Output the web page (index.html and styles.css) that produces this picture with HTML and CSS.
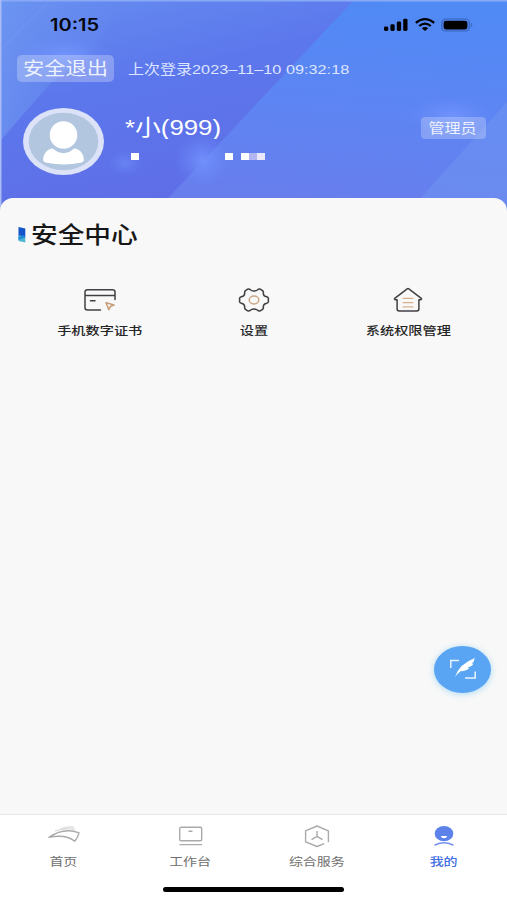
FILE: index.html
```html
<!DOCTYPE html>
<html lang="zh-CN">
<head>
<meta charset="utf-8">
<title>我的</title>
<link rel="stylesheet" href="styles.css">
</head>
<body>
<div class="app">
  <header class="hero">
    <svg class="hero-bg" viewBox="0 0 507 212" aria-hidden="true">
      <defs>
        <linearGradient id="base" x1="0" y1="0" x2="0.55" y2="1"><stop offset="0" stop-color="#668df0"/><stop offset=".4" stop-color="#5c77ec"/><stop offset="1" stop-color="#606be5"/></linearGradient>
        <linearGradient id="band" x1="0.65" y1="0" x2="0.5" y2="1"><stop offset="0" stop-color="#508af5"/><stop offset=".5" stop-color="#5d85f3"/><stop offset="1" stop-color="#697dec"/></linearGradient>
        <linearGradient id="left" x1="0" y1="0" x2="1" y2="0"><stop offset="0" stop-color="#7099f2" stop-opacity=".65"/><stop offset="1" stop-color="#638bee" stop-opacity=".15"/></linearGradient>
        <radialGradient id="glow"><stop offset="0" stop-color="#7596ff" stop-opacity=".8"/><stop offset="1" stop-color="#6a8dfb" stop-opacity="0"/></radialGradient>
      </defs>
      <rect width="507" height="212" fill="url(#base)"/>
      <path d="M0 0H120L99 42L50 84L0 141Z" fill="url(#left)"/>
      <path d="M0 50L50 0" stroke="#8eaaf5" stroke-opacity=".3"/>
      <path d="M354 0H507V212H155Z" fill="url(#band)"/>
      <path d="M507 102L408 212H507Z" fill="#6f95f2" fill-opacity=".5"/>
      <ellipse cx="65" cy="54" rx="48" ry="17" fill="url(#glow)"/>
      <ellipse cx="451" cy="116" rx="44" ry="20" fill="url(#glow)"/>
      <ellipse cx="202" cy="160" rx="27" ry="27" fill="url(#glow)"/>
      <ellipse cx="125" cy="163" rx="17" ry="13" fill="url(#glow)" opacity=".6"/>
      <path d="M0 .5H507" stroke="#88a9f5" stroke-width="2"/>
      <path d="M.5 0V212" stroke="#a9bcf6" stroke-width="2"/>
    </svg>
    <div class="status">
      <span class="time squash">10:15</span>
      <div class="status-icons">
        <svg width="25" height="14" viewBox="0 0 25 14"><rect x="0" y="8.5" width="4.3" height="4.5" rx="1.4"/><rect x="6.4" y="6.3" width="4.3" height="6.7" rx="1.4"/><rect x="12.8" y="3.6" width="4.3" height="9.4" rx="1.4"/><rect x="19.2" y=".8" width="4.3" height="12.2" rx="1.4"/></svg>
        <svg class="wifi" width="20" height="14" viewBox="0 0 20 14"><g fill="none" stroke="#000" stroke-width="2.2"><path d="M.8 4.9Q10-2.5 19.2 4.9"/><path d="M4.2 8Q10 3.2 15.8 8"/></g><path d="M6.8 10.3Q10 7.7 13.2 10.3L10 13Z"/></svg>
        <svg width="34" height="14" viewBox="0 0 34 14"><rect x=".8" y="1" width="27.5" height="12" rx="3.8" fill="none" stroke="#294f9d" stroke-opacity=".65" stroke-width="1.2"/><rect x="2.6" y="2.8" width="23.8" height="8.6" rx="2.3"/><path d="M29.8 4.6Q33 7 29.8 9.4Z" fill="#365fab" fill-opacity=".7"/></svg>
      </div>
    </div>
    <div class="session">
      <span class="logout"><span class="squash">安全退出</span></span>
      <span class="last-login squash">上次登录<span class="stamp">2023–11–10 09:32:18</span></span>
    </div>
    <div class="profile">
      <svg class="avatar" width="81" height="67" viewBox="0 0 81 67"><ellipse cx="40.5" cy="33.5" rx="40.5" ry="33.5" fill="#dce2f8"/><ellipse cx="40.5" cy="33.5" rx="34.8" ry="28.7" fill="#b2c6df"/><ellipse cx="40.5" cy="27" rx="13.8" ry="13.8" fill="#fff"/><path d="M29.5 40.3Q40.5 50 51.5 40.3Q60.8 42.5 60.8 52Q60.8 54 57.5 54.7Q40.5 58.3 23.5 54.7Q20.2 54 20.2 52Q20.2 42.5 29.5 40.3Z" fill="#fff"/></svg>
      <div class="who">
        <span class="name squash">*小(999)</span>
        <div class="masked"><i></i><i class="far"></i><i class="next"></i><i class="dim"></i><i class="soft"></i></div>
      </div>
      <span class="role"><span class="squash">管理员</span></span>
    </div>
  </header>
  <main class="panel">
    <h1 class="title">
      <svg width="8" height="16" viewBox="0 0 8 16"><path d="M.5 0L7.3 1.5V10L.5 11Z" fill="#1554c9"/><path d="M.5 8L7.3 10V15.5L.5 14Z" fill="#4fb8cf"/><path d="M.5 10.5L5.5 8L7.3 10.5L.5 13Z" fill="#2389d9"/></svg>
      <span class="squash">安全中心</span>
    </h1>
    <div class="grid">
      <div class="item">
        <svg width="32" height="26" viewBox="0 0 32 26" fill="none" stroke="#423f43" stroke-width="1.5" stroke-linecap="round" stroke-linejoin="round"><path d="M16.5 23H3.5Q1 23 1 20.8V5Q1 2.8 3.5 2.8H28.5Q31 2.8 31 5V12.5M1 8.5H31M6.5 13.8H11"/><path d="M22 15.6L30 18L26.5 19.3L24.7 22.6Z" stroke="#c69b76"/></svg>
        <span class="squash">手机数字证书</span>
      </div>
      <div class="item">
        <svg width="32" height="26" viewBox="0 0 32 26" fill="none" stroke="#423f43" stroke-width="1.5" stroke-linejoin="round"><path d="M8.4 3Q10.6 1 12.7 3Q16 5.2 19.3 3Q21.4 1 23.6 3Q25.8 4 25.3 6.2Q25.3 9.2 28.7 9.8Q31.2 10.7 30.2 13Q31.2 15.3 28.7 16.2Q25.3 16.8 25.3 19.8Q25.8 22 23.6 23Q21.4 25 19.3 23Q16 20.8 12.7 23Q10.6 25 8.4 23Q6.2 22 6.7 19.8Q6.7 16.8 3.3 16.2Q.8 15.3 1.8 13Q.8 10.7 3.3 9.8Q6.7 9.2 6.7 6.2Q6.2 4 8.4 3Z"/><ellipse cx="16" cy="13" rx="4.8" ry="3.9" stroke="#cba684"/></svg>
        <span class="squash">设置</span>
      </div>
      <div class="item">
        <svg width="32" height="26" viewBox="0 0 32 26" fill="none" stroke="#423f43" stroke-width="1.5" stroke-linejoin="round" stroke-linecap="round"><path d="M15.2 1.8Q16 1.2 16.8 1.8L29.3 11.3Q30 12.5 28.3 12.8H26.9V22Q26.9 23.9 24.8 23.9H7.2Q5.1 23.9 5.1 22V12.8H3.7Q2 12.5 2.7 11.3Z"/><path d="M11.2 11.3H20.8M11.2 15.6H20.8M11.2 19.9H20.8" stroke="#d6b08e" stroke-width="1.3"/></svg>
        <span class="squash">系统权限管理</span>
      </div>
    </div>
    <div class="fab">
      <svg width="28" height="23" viewBox="0 0 28 23"><path d="M1.8 10V2.5H10M26.2 13.5V20H16" fill="none" stroke="#eaf5ff" stroke-width="1.5"/><path d="M6 19Q10 6 26 0Q24.5 2.5 24.8 3.8L22.6 5.3L24.4 5.8Q22.5 9 18.5 9.4L20.2 10.2Q16.5 13.8 12 13Q9 15 6 19Z" fill="#fff"/></svg>
    </div>
  </main>
  <footer class="bottom">
    <nav class="tabs">
      <div class="tab">
        <svg width="34" height="24" viewBox="0 0 34 24" fill="none" stroke="#aaa" stroke-width="1.4" stroke-linejoin="round"><path d="M3 12.3Q18 2 33 7.8Q32.2 12 28.7 16.2Q20 9 3 12.3Z"/><path d="M9 5.8Q19 3 29 4.2M15 3.6Q22 1.4 28 2.1" stroke="#ddd"/></svg>
        <span class="squash">首页</span>
      </div>
      <div class="tab">
        <svg width="34" height="24" viewBox="0 0 34 24" fill="none" stroke="#aaa" stroke-width="1.4"><rect x="6.7" y="2.3" width="22" height="13.5" rx="1.5"/><path d="M6.5 19.6H29M15.5 6.2H19.5"/></svg>
        <span class="squash">工作台</span>
      </div>
      <div class="tab">
        <svg width="34" height="24" viewBox="0 0 34 24" fill="none" stroke="#aaa" stroke-width="1.4" stroke-linejoin="round"><path d="M24.2 18.6L17 21.5L5.6 16.8V5.8L17 1L28.4 5.8V17.2M17 6V11.6M11.5 14.7L17 11.3L22.5 14.7"/></svg>
        <span class="squash">综合服务</span>
      </div>
      <div class="tab active">
        <svg width="34" height="24" viewBox="0 0 34 24"><ellipse cx="17" cy="8.7" rx="9.3" ry="7.6" fill="#5d82e9"/><path d="M13.8 10.9H20.2Q19.7 13.2 17 13.2Q14.3 13.2 13.8 10.9Z" fill="#fff"/><path d="M8.1 20Q17 15.6 25.9 20" fill="none" stroke="#7791e9" stroke-width="1.6" stroke-linecap="round"/></svg>
        <span class="squash">我的</span>
      </div>
    </nav>
    <div class="home-bar"></div>
  </footer>
</div>
</body>
</html>
```
FILE: styles.css
```css
* { box-sizing: border-box; }
body { margin: 0; background: #f8f8f8; font-family: "Liberation Sans", "Noto Sans CJK SC", sans-serif; }
svg { display: block; flex: none; }
.app { width: 507px; height: 900px; display: flex; flex-direction: column; overflow: hidden; }
/* Wide letterforms: full horizontal size, reduced height */
.squash { display: inline-block; transform: scaleY(.84); white-space: nowrap; }

.hero { position: relative; height: 198px; flex: none; color: #fff; }
.hero-bg { position: absolute; top: 0; left: 0; width: 507px; height: 212px; }
.status, .session, .profile { position: relative; display: flex; align-items: center; }
.status { height: 48px; padding: 1px 32px 0 50px; justify-content: space-between; }
.time { font: 600 20px/24px Inter, sans-serif; color: #05070f; }
.status-icons { display: flex; align-items: center; gap: 6px; }
.session { height: 40px; padding-left: 17px; gap: 14px; }
.logout { width: 97px; height: 27px; border-radius: 5px; background: rgba(255,255,255,.26); display: flex; align-items: center; justify-content: center; font-size: 21.3px; line-height: 27px; color: #eef2ff; }
.logout .squash { padding-top: 2px; }
.last-login { font-size: 16px; line-height: 24px; padding-top: 2px; color: #dde5ff; }
.stamp { font-size: 16.3px; }
.profile { height: 80px; padding: 0 21px 0 23px; margin-top: 13px; }
.who { margin-left: 21px; height: 60px; flex: 1; }
.name { font-size: 25.8px; line-height: 32px; height: 32px; display: block; transform-origin: 0 50%; }
.masked { display: flex; margin: 10px 0 0 6px; height: 7px; }
.masked i { width: 8px; height: 7px; background: #fff; }
.masked .far { margin-left: 86px; }
.masked .next { margin-left: 8px; }
.masked .dim { background: #b3b7f1; }
.masked .soft { background: #ece8fc; }
.role { width: 65px; height: 22px; margin-bottom: 26px; border-radius: 4px; background: rgba(255,255,255,.24); display: flex; align-items: center; justify-content: center; font-size: 16px; line-height: 22px; color: #eef2ff; }
.role .squash { padding: 1px 2px 0 0; }

.panel { position: relative; flex: 1; background: #f8f8f8; border-radius: 13px 13px 0 0; }
.title { display: flex; align-items: center; gap: 5px; height: 40px; margin: 17px 0 0 18px; font-size: 26.7px; line-height: 40px; font-weight: 500; color: #171717; }
.grid { display: grid; grid-template-columns: repeat(3, 154.3px); margin: 32px 0 0 22.6px; }
.item { display: flex; flex-direction: column; align-items: center; gap: 7px; font-size: 14.2px; line-height: 22px; font-weight: 500; color: #262626; }
.fab { position: absolute; left: 434px; top: 448px; width: 57px; height: 47px; border-radius: 50%; background: #5aa4f4; box-shadow: 0 1px 6px rgba(90,190,244,.5); display: flex; align-items: center; justify-content: center; }

.bottom { height: 86px; flex: none; background: #fff; border-top: 1px solid #e7e9e9; }
.tabs { display: grid; grid-template-columns: repeat(4, 1fr); height: 72px; padding-top: 10px; }
.tab { display: flex; flex-direction: column; align-items: center; gap: 2px; font-size: 14px; line-height: 22px; color: #707070; }
.active { color: #3f70e4; font-weight: 500; }
.home-bar { width: 181px; height: 5px; margin: 0 auto; border-radius: 3px; background: #000; }
```
